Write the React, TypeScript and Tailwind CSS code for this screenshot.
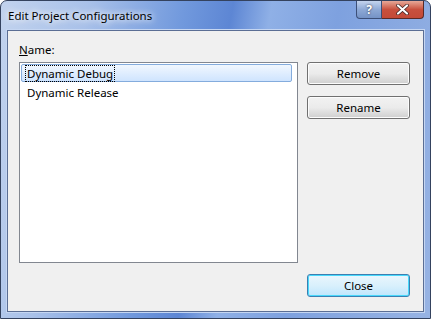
// EditProjectConfigurations — Vista-style dialog listing build configurations.

const font = { fontFamily: '"Noto Sans", "Open Sans", sans-serif' };

function CaptionButtons() {
  return (
    <div className="absolute right-[6px] top-0 flex h-[18px]">
      <div className="flex w-[26px] items-center justify-center rounded-bl-[4px] border border-t-0 border-[#3c4f78] bg-gradient-to-b from-[#c4d4ee] via-[#8ea9d6] to-[#7593c6] text-[12px] font-bold leading-none text-white [text-shadow:0_0_2px_#223]">
        ?
      </div>
      <div className="flex w-[42px] items-center justify-center rounded-br-[4px] border border-l-0 border-t-0 border-[#5a2a28] bg-gradient-to-b from-[#e6a898] via-[#c8503e] to-[#c44a38]">
        <svg width="13" height="11" viewBox="0 0 13 11">
          <path d="M2 1.5 L11 9.5 M11 1.5 L2 9.5" stroke="#3a2020" strokeWidth="3.6" strokeLinecap="round" />
          <path d="M2 1.5 L11 9.5 M11 1.5 L2 9.5" stroke="#ffffff" strokeWidth="2.2" strokeLinecap="round" />
        </svg>
      </div>
    </div>
  );
}

function Button({ label, primary }: { label: string; primary?: boolean }) {
  return (
    <div
      className={
        primary
          ? 'flex h-[23px] w-[103px] items-center justify-center rounded-[3px] border border-[#3c7fb1] bg-gradient-to-b from-[#eaf6fd] via-[#d9f0fc] to-[#bee6fd] text-[11.5px] text-black shadow-[inset_0_0_0_1px_#48d8fb]'
          : 'flex h-[23px] w-[103px] items-center justify-center rounded-[3px] border border-[#707070] bg-gradient-to-b from-[#f2f2f2] via-[#ebebeb] to-[#cfcfcf] text-[11.5px] text-black shadow-[inset_0_0_0_1px_#fcfcfc]'
      }
    >
      {label}
    </div>
  );
}

export default function App() {
  return (
    <div className="h-[319px] w-[431px] bg-white" style={font}>
      <div className="relative flex h-[319px] w-[431px] flex-col rounded-t-[7px] border border-[#34425e] bg-[linear-gradient(100deg,#c2d3ee_0%,#a9c1e9_18%,#7199dd_38%,#5d86d4_48%,#8fb0e6_56%,#7ea1df_70%,#97b3e3_100%)]">
        <div className="flex h-[29px] shrink-0 items-center pl-[7px] pt-[1px] text-[11.5px] text-black [text-shadow:0_0_6px_#fff,0_0_8px_#fff]">
          Edit Project Configurations
        </div>
        <CaptionButtons />
        <div className="mx-[6px] mb-[6px] flex flex-1 flex-col border border-[#5b6e94] bg-[#f0f0f0] shadow-[0_0_0_1px_#c5d6f2]">
          <div className="flex flex-1 pl-[11px] pr-[12px]">
            <div className="flex flex-col">
              <div className="mt-[11px] h-[20px] text-[11.5px] leading-[16px] text-black">
                <span className="underline underline-offset-[1px]">N</span>ame:
              </div>
              <div className="h-[201px] w-[279px] border border-[#828790] bg-white p-[1px]">
                <div className="flex h-[18px] w-[271px] items-center rounded-[2px] border border-[#84acdd] bg-gradient-to-b from-[#f1f7fe] to-[#cfe4fe] pl-[3px]">
                  <span className="border border-dotted border-black px-[1px] text-[11.5px] leading-[15px] text-black">
                    Dynamic Debug
                  </span>
                </div>
                <div className="mt-[2px] flex h-[18px] items-center pl-[6px] text-[11.5px] text-black">Dynamic Release</div>
              </div>
            </div>
            <div className="ml-[9px] flex flex-col justify-between pt-[31px] pb-[14px]">
              <div className="flex flex-col gap-[11px]">
                <Button label="Remove" />
                <Button label="Rename" />
              </div>
              <Button label="Close" primary />
            </div>
          </div>
        </div>
      </div>
    </div>
  );
}
